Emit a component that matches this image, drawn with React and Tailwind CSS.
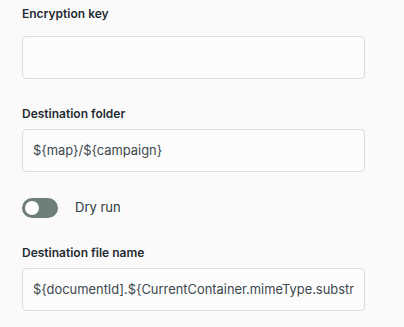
import { useState } from 'react';

function Field({ label, value, inputMargin }) {
  return (
    <div className="flex flex-col">
      <label className="text-[12px] leading-[20px] font-semibold text-[#1f2c31]">{label}</label>
      <input
        defaultValue={value}
        className={`${inputMargin} w-[343px] h-[43px] rounded-[4px] border border-[#d8dddd] bg-[#fdfcfd] px-[10px] text-[12.9px] text-[#3b484d] outline-none`}
      />
    </div>
  );
}

export default function App() {
  const [dryRun, setDryRun] = useState(false);

  return (
    <div className="h-[327px] w-[404px] overflow-hidden bg-[#fbfafb] pl-[22px] pt-[4px] font-['Inter',sans-serif]">
      <Field label="Encryption key" value="" inputMargin="mt-[12px]" />

      <div className="mt-[25px]">
        <Field label="Destination folder" value="${map}/${campaign}" inputMargin="mt-[5px]" />
      </div>

      {/* toggle */}
      <div className="mt-[26px] flex items-center gap-[17px]">
        <button
          onClick={() => setDryRun(!dryRun)}
          className={`flex h-[20px] w-[36px] items-center rounded-full p-[3px] ${dryRun ? 'justify-end bg-[#3c6e64]' : 'justify-start bg-[#6e7f7b]'}`}
        >
          <span className="block h-[14px] w-[14px] rounded-full bg-white" />
        </button>
        <span className="text-[13px] text-[#2b383d]">Dry run</span>
      </div>

      <div className="mt-[25px]">
        <Field
          label="Destination file name"
          value="${documentId].${CurrentContainer.mimeType.substring(CurrentContainer.mimeType.indexOf('/') + 1)}"
          inputMargin="mt-[5px]"
        />
      </div>
    </div>
  );
}
